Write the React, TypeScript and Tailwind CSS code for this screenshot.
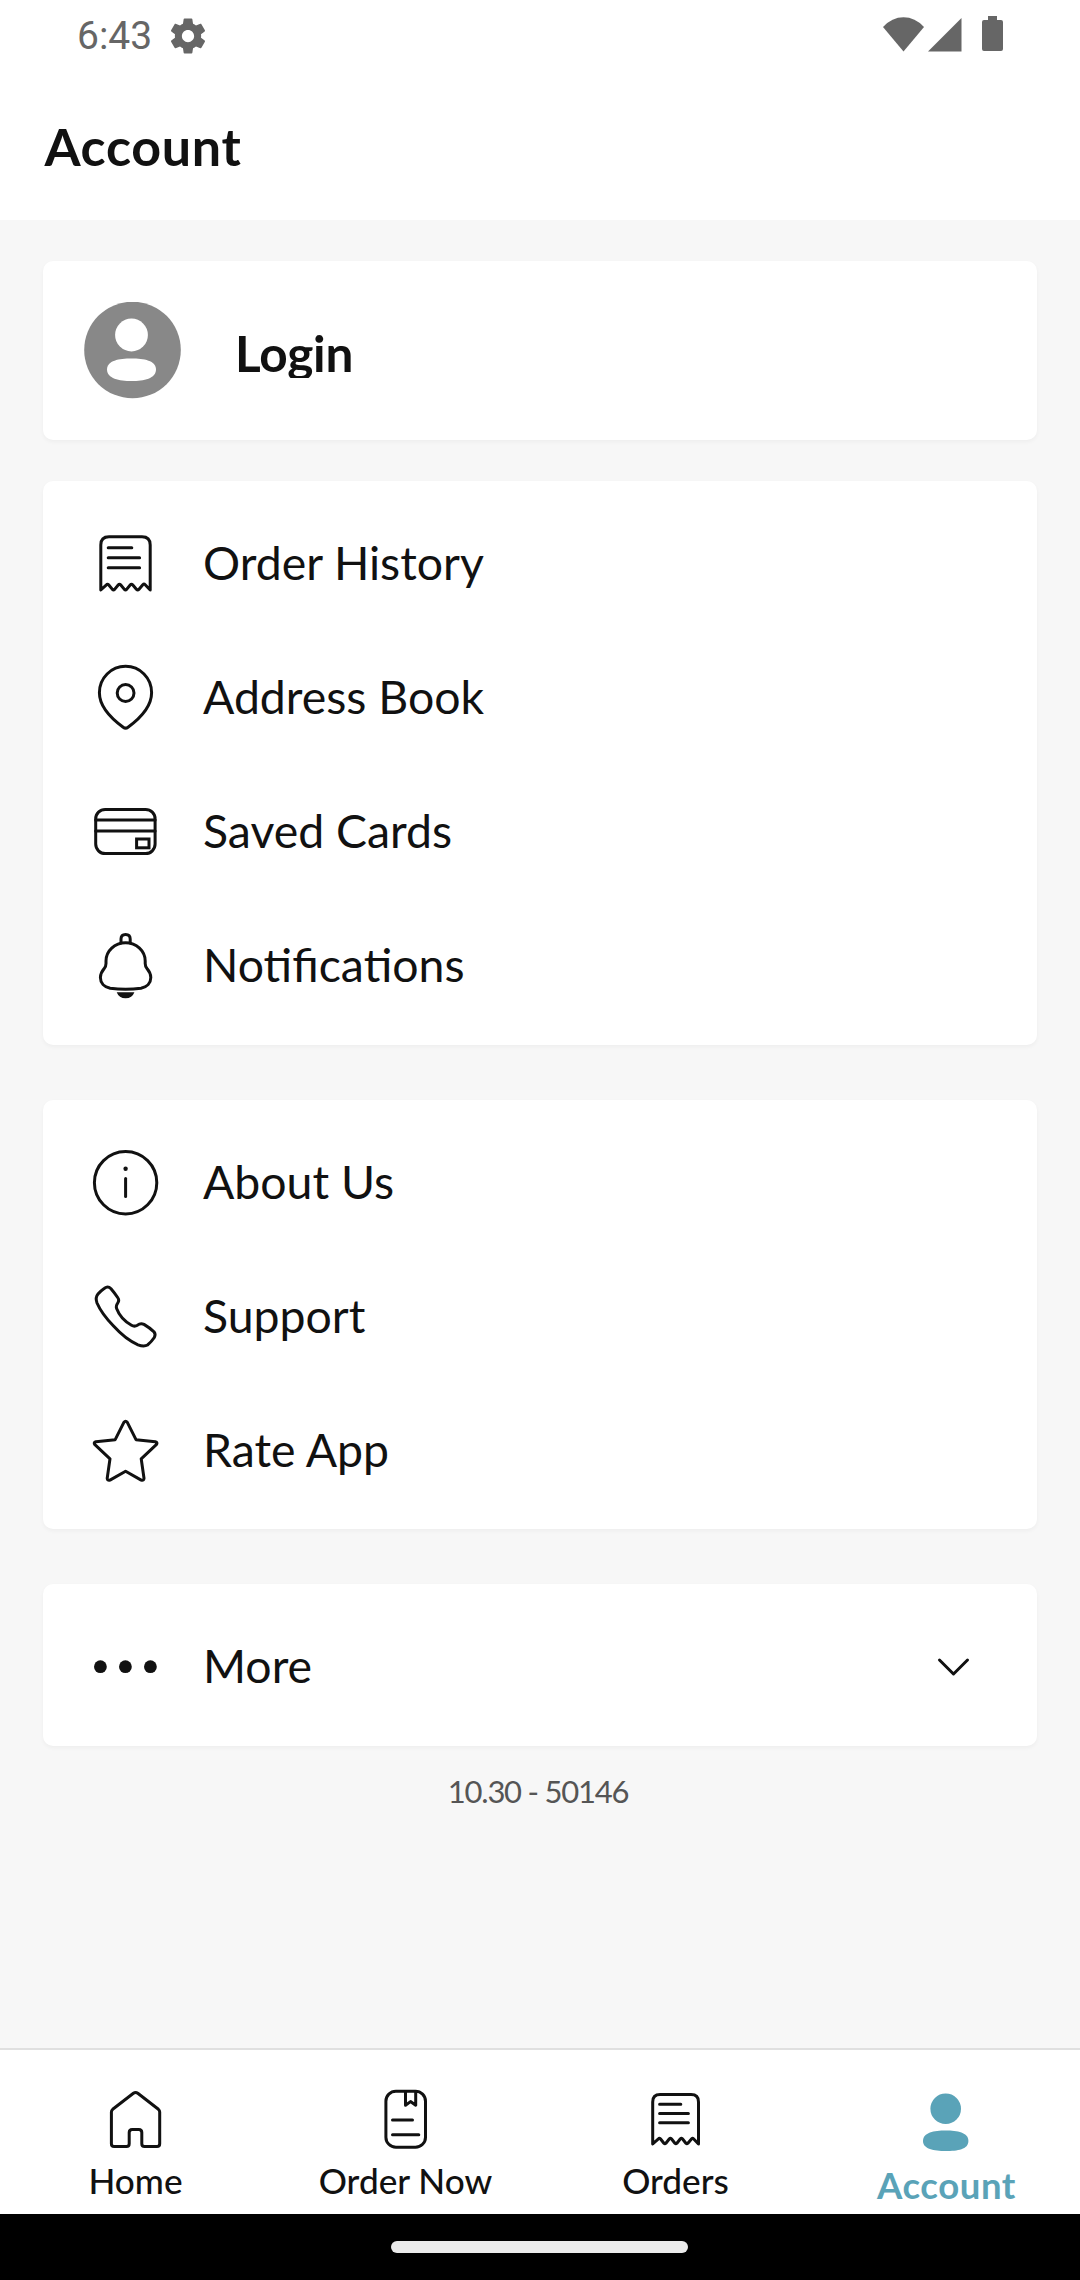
import type { ReactNode } from 'react';

const stroke = {
  fill: 'none',
  stroke: 'currentColor',
  strokeWidth: 3,
  strokeLinecap: 'round' as const,
  strokeLinejoin: 'round' as const,
};

function MenuIcon({ children }: { children: ReactNode }) {
  return (
    <svg className="size-20 shrink-0" viewBox="0 0 80 80" {...stroke}>
      {children}
    </svg>
  );
}

const receipt = (
  <MenuIcon>
    <path d="M15.8 66V21q0-8.2 8.2-8.2h33q8.2 0 8.2 8.2v45l-5-5.2q-1.2-1.2-2.4 0l-4 4.6q-1.1 1.1-2.2 0l-4-4.6q-1.1-1.2-2.2 0l-3.8 4.6q-1.1 1.1-2.2 0l-3.8-4.6q-1.1-1.2-2.2 0l-3.8 4.6q-1.1 1.1-2.2 0l-3.8-4.6q-1.1-1.2-2.2 0z" />
    <path d="M23.2 23.7h23.6M23.2 33.7h31.4M23.2 43.7h31.4" />
  </MenuIcon>
);

const pin = (
  <MenuIcon>
    <path d="M40.6 8.3C55 8.3 66.6 20 66.6 34.7C66.6 50 53.5 61.5 43 69.2Q40.6 71 38.2 69.2C27.7 61.5 14.4 50 14.4 34.7C14.4 20 26.2 8.3 40.6 8.3Z" />
    <circle cx="40.6" cy="35" r="8.4" />
  </MenuIcon>
);

const card = (
  <MenuIcon>
    <rect x="10.7" y="17.4" width="59.4" height="44.2" rx="9.5" />
    <path d="M10.7 28h59.4M10.7 39h59.4" />
    <rect x="51.6" y="47" width="12.4" height="8.8" strokeLinejoin="miter" />
  </MenuIcon>
);

const bell = (
  <MenuIcon>
    <path d="M36 17v-4q0-4.6 4.6-4.6t4.6 4.6v4" />
    <path d="M40.6 16.8C51.5 16.8 60.2 25 60.2 35V37.5Q60.2 40.2 62 42.5C64.500 45.500 65.800 47.800 65.800 51.5C65.800 57 62 61 56 62.2Q48.5 63.3 40.6 63.3T25.2 62.2C19.2 61 15.400 57 15.400 51.5C15.400 47.800 16.700 45.500 19.2 42.5Q21 40.2 21 37.5V35C21 25 29.700 16.8 40.6 16.8Z" />
    <path d="M31.7 66.2h17.7q-2.2 6.1-8.8 6.1t-8.9-6.1z" fill="currentColor" stroke="none" />
  </MenuIcon>
);

const info = (
  <MenuIcon>
    <circle cx="40.6" cy="39.7" r="31.2" />
    <circle cx="40.6" cy="25.7" r="2.2" fill="currentColor" stroke="none" />
    <path d="M40.6 35.6v17.8" />
  </MenuIcon>
);

const phone = (
  <MenuIcon>
    <path d="M19.5 11.2Q23 8.6 26 11.8Q30 16.5 33 21Q34.4 23 33 25.5Q30.6 29 31.6 31.5Q35.5 42 46.5 48.3Q49.5 50 52.5 48.2Q55.5 45.8 59 47.4Q64.5 50.7 69 54.8Q71 57.3 69.3 60.5Q66.5 64.7 62.5 68Q59 70 53 67.8Q41 62.8 28.3 48.8Q16.5 36.5 12 26Q10 20.5 13 17Q16 13.6 19.5 11.2Z" />
  </MenuIcon>
);

const star = (
  <MenuIcon>
    <path d="M39 11.2q1.6-2 3.2 0l8.8 17.5 19.3 2q2.8.8 1 3L56.2 47.8l2.8 19.5q-.2 2.6-2.8 1.8L40.6 60.2 25 69.1q-2.6.8-2.8-1.8L25 47.8 9.9 33.7q-1.8-2.2 1-3l19.3-2z" />
  </MenuIcon>
);

const dots = (
  <MenuIcon>
    <g fill="currentColor" stroke="none">
      <circle cx="15.4" cy="39.7" r="6.4" />
      <circle cx="40.4" cy="39.7" r="6.4" />
      <circle cx="65.4" cy="39.7" r="6.4" />
    </g>
  </MenuIcon>
);

const orderItems = [
  { label: 'Order History', icon: receipt },
  { label: 'Address Book', icon: pin },
  { label: 'Saved Cards', icon: card },
  { label: 'Notifications', icon: bell },
];

const appItems = [
  { label: 'About Us', icon: info },
  { label: 'Support', icon: phone },
  { label: 'Rate App', icon: star },
];

const tabs = [
  {
    label: 'Home',
    icon: (
      <path d="M33.4 43.3q2.2-1.600 4.400 0L58.400 59.300q1.300 1.100 1.300 2.800V93.800q0 2.800-2.800 2.800H44.600q-2.800 0-2.800-2.800V82.500q0-3-3-3h-6.600q-3 0-3 3v11.300q0 2.800-2.800 2.800H14.200q-2.800 0-2.800-2.800V62.100q0-1.700 1.300-2.800z" />
    ),
  },
  {
    label: 'Order Now',
    icon: (
      <>
        <rect x="15.9" y="41.2" width="39.6" height="56" rx="10" />
        <path d="M35.5 41.5v13.7l5-3.6 5.2 3.6V41.5M22.5 70h20M22.5 84.7h26.3" />
      </>
    ),
  },
  {
    label: 'Orders',
    icon: (
      <>
        <path d="M12.7 94V52q0-7.4 7.4-7.4h31q7.4 0 7.4 7.4v42l-5-5.2q-.9-.9-1.8 0l-3.8 4.4q-1 1-2 0l-3.5-4.4q-1-1-2 0l-3.5 4.4q-1 1-2 0l-3.5-4.4q-1-1-2 0l-3.5 4.4q-1 1-2 0l-3.5-4.4q-1-1-2 0z" />
        <path d="M19.6 54.3h21.2M19.6 63.5h28.8M19.6 72.7h28.8" />
      </>
    ),
  },
];

function Item({ label, icon, children }: { label: string; icon: ReactNode; children?: ReactNode }) {
  return (
    <div className="flex h-[134px] items-center pl-[42px]">
      {icon}
      <span className="mb-[3px] ml-[38px] text-[46.4px] leading-none">{label}</span>
      {children}
    </div>
  );
}

export default function App() {
  return (
    <div className="flex h-[2280px] w-[1080px] flex-col bg-[#f7f7f7] font-[Lato,sans-serif] text-[#111111]">
      <header className="h-[220px] bg-white">
        <div className="flex h-[72px] items-center pl-[77px] text-[#666666]">
          <span className="mt-[1px] font-[Roboto,sans-serif] text-[39px] leading-none">6:43</span>
          <svg className="ml-[15px] size-[42px]" viewBox="0 0 24 24" fill="currentColor">
            <path d="M19.43 12.98c.04-.32.07-.64.07-.98s-.03-.66-.07-.98l2.11-1.65c.19-.15.24-.42.12-.64l-2-3.46c-.12-.22-.39-.3-.61-.22l-2.49 1c-.52-.4-1.08-.73-1.69-.98l-.38-2.65C14.46 2.18 14.25 2 14 2h-4c-.25 0-.46.18-.49.42l-.38 2.65c-.61.25-1.17.59-1.69.98l-2.49-1c-.23-.09-.49 0-.61.22l-2 3.46c-.13.22-.07.49.12.64l2.11 1.65c-.04.32-.07.65-.07.98s.03.66.07.98l-2.11 1.65c-.19.15-.24.42-.12.64l2 3.46c.12.22.39.3.61.22l2.49-1c.52.4 1.08.73 1.69.98l.38 2.65c.03.24.24.42.49.42h4c.25 0 .46-.18.49-.42l.38-2.65c.61-.25 1.17-.59 1.69-.98l2.49 1c.23.09.49 0 .61-.22l2-3.46c.12-.22.07-.49-.12-.64l-2.11-1.65zM12 15.5c-1.93 0-3.5-1.57-3.5-3.5s1.57-3.5 3.5-3.5 3.5 1.57 3.5 3.5-1.57 3.5-3.5 3.5z" />
          </svg>
          <svg className="mr-[74px] ml-auto h-[40px] w-[126px]" viewBox="0 0 126 40" fill="currentColor">
            <path d="M3 11Q12 1.300 23.500 1.300T44 11L23.500 35.500z" />
            <path d="M81.500 2v33.500H48z" />
            <path d="M108 0h9v4h4q2 0 2 2v27q0 2-2 2h-17q-2 0-2-2V6q0-2 2-2h4z" />
          </svg>
        </div>
        <h1 className="pt-[42px] pl-[44.5px] text-[52px] leading-[64px] font-bold tracking-[0.7px]">Account</h1>
      </header>

      <main className="flex flex-1 flex-col px-[43px] pt-[41px]">
        <section className="flex h-[179px] rounded-[10px] bg-white pt-[41px] pl-[41px] shadow-[0_2px_4px_rgba(0,0,0,0.04)]">
          <svg className="h-[97px] w-[97px]" viewBox="0 0 97 97">
            <circle cx="48.500" cy="48" r="48.300" fill="#888888" />
            <circle cx="47.500" cy="33" r="16.400" fill="#ffffff" />
            <path d="M23 67.500C23 58.500 35 56.500 47.500 56.500S72 58.500 72 67.500S60 79 47.500 79S23 76.500 23 67.500Z" fill="#ffffff" />
          </svg>
          <span className="mt-[21px] ml-[54px] h-[55px] overflow-hidden text-[49.5px] leading-[60px] font-bold tracking-[-0.25px]">Login</span>
        </section>

        <section className="mt-[41px] h-[564px] rounded-[10px] bg-white pt-4 shadow-[0_2px_4px_rgba(0,0,0,0.04)]">
          {orderItems.map((i) => <Item key={i.label} {...i} />)}
        </section>

        <section className="mt-[55px] h-[429px] rounded-[10px] bg-white pt-4 shadow-[0_2px_4px_rgba(0,0,0,0.04)]">
          {appItems.map((i) => <Item key={i.label} {...i} />)}
        </section>

        <section className="mt-[55px] h-[162px] rounded-[10px] bg-white pt-4 shadow-[0_2px_4px_rgba(0,0,0,0.04)]">
          <Item label="More" icon={dots}>
            <svg className="mr-[63px] ml-auto h-[40px] w-[40px]" viewBox="0 0 40 40" {...stroke}>
              <path d="M5.500 13L19.500 27L33.500 13" />
            </svg>
          </Item>
        </section>

        <p className="mt-[26px] pr-[4px] text-center text-[31px] leading-[38px] tracking-[-1.25px] text-[#555555]">10.30 - 50146</p>
      </main>

      <nav className="flex h-[166px] border-t-2 border-[#e0e0e0] bg-white">
        {tabs.map((t) => (
          <div key={t.label} className="flex w-[270px] flex-col items-center">
            <svg className="h-[104px] w-[71px] shrink-0" viewBox="0 0 71 104" {...stroke}>
              {t.icon}
            </svg>
            <span className="mt-[5px] pl-[1px] text-[35.2px] leading-[42px] font-medium">{t.label}</span>
          </div>
        ))}
        <div className="flex w-[270px] flex-col items-center text-[#5aa3b8]">
          <svg className="h-[104px] w-[71px] shrink-0" viewBox="0 0 71 104" fill="currentColor">
            <circle cx="35.700" cy="58.700" r="15.300" />
            <path d="M13 91C13 82.500 24 80.500 35.700 80.500S58.400 82.500 58.400 91S47.500 101 35.700 101S13 99 13 91Z" />
          </svg>
          <span className="mt-[10px] pl-[3px] text-[36.5px] leading-[42px] font-bold tracking-[0.6px]">Account</span>
        </div>
      </nav>

      <div className="flex h-[66px] justify-center bg-black pt-[27px] pr-[2px]">
        <div className="h-[12px] w-[297px] rounded-full bg-[#ebebeb]" />
      </div>
    </div>
  );
}
